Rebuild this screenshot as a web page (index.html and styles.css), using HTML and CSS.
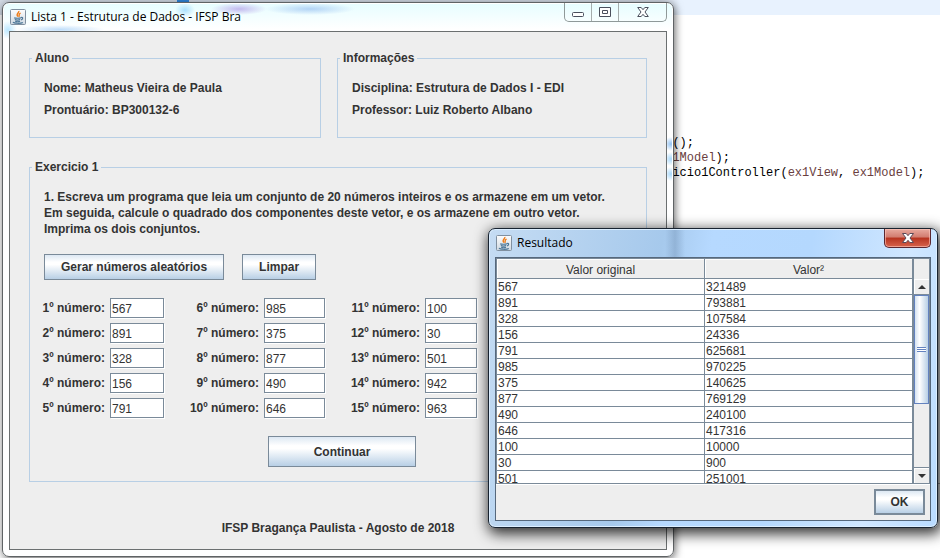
FILE: index.html
```
<!DOCTYPE html>
<html lang="pt-BR">
<head>
<meta charset="utf-8">
<title>Lista 1 - Estrutura de Dados</title>
<link rel="stylesheet" href="styles.css">
</head>
<body>
<svg class="defs" aria-hidden="true">
  <symbol id="java" viewBox="0 0 16 16">
    <linearGradient id="tile" x1="0" y1="0" x2="0" y2="1"><stop offset="0" stop-color="#fdfdfd"/><stop offset="1" stop-color="#cfd9e2"/></linearGradient>
    <rect x=".5" y=".5" width="15" height="15" rx="1" fill="url(#tile)" stroke="#8090a0"/>
    <path d="M8.8 2C9.5 4 5.4 4.600 7.800 7.600M10.600 4.200C7.800 5.200 10 6.200 8.800 7.800" fill="none" stroke="#ee7d1a" stroke-width="1.400"/>
    <path d="M4.200 8.700C5 9.400 9.600 9.400 11 8.700M4.800 10.600C6 11.300 9 11.300 10.200 10.600M5.200 12.200C6.400 12.700 9 12.700 10 12.200M11 8.600C13.400 7.800 13 10.600 11 10.800M3 13.200C4 14.600 11 14.600 12.800 13.400" fill="none" stroke="#4d7797" stroke-width="1.200"/>
  </symbol>
</svg>
<div class="desktop">
  <div class="editor-line"></div>
  <div class="divider"></div>
  <pre class="code">el();
<span>ex1Model</span>);
rcicio1Controller(<span>ex1View</span>, <span>ex1Model</span>);</pre>

  <main class="window main">
    <header class="titlebar">
      <svg class="logo"><use href="#java"/></svg>
      <h1>Lista 1 - Estrutura de Dados - IFSP Bra</h1>
      <div class="controls">
        <button aria-label="Minimizar"><svg width="12" height="12"><rect x=".5" y="6.5" width="11" height="4" rx="1" fill="#fff" stroke="#4a4f5c"/></svg></button>
        <button aria-label="Maximizar"><svg width="12" height="12"><path d="M.5 1.5h11v9H.5zM3.5 4.5h5v3h-5z" fill="#fff" stroke="#4a4f5c"/></svg></button>
        <button class="wide" aria-label="Fechar"><svg width="12" height="12"><path d="M.7 1.5h3.5L6 3.7l1.8-2.2h3.5L8 6l3.3 4.5H7.8L6 8.3l-1.8 2.2H.7L4 6z" fill="#fff" stroke="#4a4f5c"/></svg></button>
      </div>
    </header>
    <div class="client">
      <div class="groups">
        <fieldset><legend>Aluno</legend><p>Nome: Matheus Vieira de Paula</p><p>Prontuário: BP300132-6</p></fieldset>
        <fieldset><legend>Informações</legend><p>Disciplina: Estrutura de Dados I - EDI</p><p>Professor: Luiz Roberto Albano</p></fieldset>
      </div>
      <fieldset class="exercise">
        <legend>Exercicio 1</legend>
        <p class="task">1. Escreva um programa que leia um conjunto de 20 números inteiros e os armazene em um vetor.<br>Em seguida, calcule o quadrado dos componentes deste vetor, e os armazene em outro vetor.<br>Imprima os dois conjuntos.</p>
        <div class="actions"><button class="metal">Gerar números aleatórios</button><button class="metal">Limpar</button></div>
        <div class="numbers">
          <label for="n1">1º número:</label><input id="n1" value="567">
          <label for="n6">6º número:</label><input id="n6" value="985">
          <label for="n11">11º número:</label><input id="n11" value="100">
          <label for="n2">2º número:</label><input id="n2" value="891">
          <label for="n7">7º número:</label><input id="n7" value="375">
          <label for="n12">12º número:</label><input id="n12" value="30">
          <label for="n3">3º número:</label><input id="n3" value="328">
          <label for="n8">8º número:</label><input id="n8" value="877">
          <label for="n13">13º número:</label><input id="n13" value="501">
          <label for="n4">4º número:</label><input id="n4" value="156">
          <label for="n9">9º número:</label><input id="n9" value="490">
          <label for="n14">14º número:</label><input id="n14" value="942">
          <label for="n5">5º número:</label><input id="n5" value="791">
          <label for="n10">10º número:</label><input id="n10" value="646">
          <label for="n15">15º número:</label><input id="n15" value="963">
        </div>
        <button class="metal continue">Continuar</button>
      </fieldset>
      <footer>IFSP Bragança Paulista - Agosto de 2018</footer>
    </div>
  </main>

  <section class="window dialog" role="dialog" aria-labelledby="result-title">
    <header class="titlebar">
      <svg class="logo"><use href="#java"/></svg>
      <h2 id="result-title">Resultado</h2>
      <button class="close" aria-label="Fechar"><svg width="14" height="12"><path d="M1.5 1.5h3.7L7 3.7l1.8-2.2h3.7L9 6l3.5 4.5H8.8L7 8.3l-1.8 2.2H1.5L5 6z" fill="#fff" stroke="#5c4a58"/></svg></button>
    </header>
    <div class="client">
      <div class="scrollpane">
        <div class="viewport">
          <table>
            <thead><tr><th>Valor original</th><th>Valor²</th></tr></thead>
            <tbody>
              <tr><td>567</td><td>321489</td></tr>
              <tr><td>891</td><td>793881</td></tr>
              <tr><td>328</td><td>107584</td></tr>
              <tr><td>156</td><td>24336</td></tr>
              <tr><td>791</td><td>625681</td></tr>
              <tr><td>985</td><td>970225</td></tr>
              <tr><td>375</td><td>140625</td></tr>
              <tr><td>877</td><td>769129</td></tr>
              <tr><td>490</td><td>240100</td></tr>
              <tr><td>646</td><td>417316</td></tr>
              <tr><td>100</td><td>10000</td></tr>
              <tr><td>30</td><td>900</td></tr>
              <tr><td>501</td><td>251001</td></tr>
            </tbody>
          </table>
        </div>
        <div class="scrollbar">
          <div class="corner"></div>
          <button aria-label="Rolar para cima"><svg width="8" height="4"><path d="M0 4 4 0l4 4z"/></svg></button>
          <div class="track"><div class="thumb"><i></i></div></div>
          <button class="down" aria-label="Rolar para baixo"><svg width="8" height="4"><path d="M0 0h8L4 4z"/></svg></button>
        </div>
      </div>
      <div class="dialog-actions"><button class="metal ok">OK</button></div>
    </div>
  </section>
</div>
</body>
</html>
```
FILE: styles.css
```
* { box-sizing: border-box; }
body {
  margin: 0;
  background: #fff;
  color: #333;
  font: bold 12px/16px "Liberation Sans", Arial, sans-serif;
}
h1, h2, p, pre { margin: 0; }
button, input { font: inherit; color: inherit; }
.defs { position: absolute; width: 0; height: 0; }
.desktop { position: relative; min-height: 100vh; overflow: hidden; }
.editor-line {
  height: 15px;
  background:
    linear-gradient(#2f86dd, #2f86dd) 177px 0 / 12px 2px no-repeat,
    linear-gradient(90deg, #d3dbe6 660px, #e8f2fe 680px);
}
.divider { position: absolute; top: 483px; right: 0; width: 20px; height: 1px; background: #aaa; }
.code {
  position: absolute;
  top: 136px;
  left: 658px;
  color: #000;
  font: 12px/15px "Liberation Mono", monospace;
}
.code span { color: #6a3e3e; }

/* Window frames; the glass shows soft smudges of what lies behind */
.window { position: absolute; display: flex; flex-direction: column; border-radius: 7px; }
.main {
  top: 2px;
  left: 2px;
  width: 672px;
  height: 555px;
  padding: 0 6px 6px;
  border: 1px solid #5f6365;
  background:
    radial-gradient(closest-side, rgba(160, 130, 225, .55), transparent) 208px 0 / 56px 12px no-repeat,
    radial-gradient(closest-side, rgba(120, 170, 235, .5), transparent) 262px 0 / 90px 12px no-repeat,
    radial-gradient(closest-side, rgba(130, 205, 250, .6), transparent) 172px 0 / 20px 14px no-repeat,
    radial-gradient(closest-side, rgba(130, 190, 245, .5), transparent) 12px 22px / 90px 9px no-repeat,
    radial-gradient(closest-side, rgba(140, 215, 255, .6), transparent) -4px 18px / 18px 18px no-repeat,
    radial-gradient(closest-side, rgba(120, 180, 240, .8), transparent) 661px 134px / 14px 14px no-repeat,
    radial-gradient(closest-side, rgba(130, 200, 250, .7), transparent) 661px 149px / 14px 14px no-repeat,
    radial-gradient(closest-side, rgba(130, 200, 250, .7), transparent) 661px 164px / 14px 14px no-repeat,
    linear-gradient(#e6fdff, #fff 26px);
  box-shadow: inset 0 0 0 1px #fff, 1px 2px 8px rgba(0, 0, 0, .6);
}
.dialog {
  top: 228px;
  left: 488px;
  width: 450px;
  height: 300px;
  padding: 0 6px 6px;
  border: 1px solid #182330;
  background:
    linear-gradient(90deg, transparent, rgba(90, 120, 155, .3), transparent) 176px 0 / 20px 28px no-repeat,
    linear-gradient(100deg, #c5dcf3, #a6c9ec 35%, #b6d9ff 45%, #b4d8fe 65%, #d0e7ff 85%, #b9dbff);
  box-shadow: inset 0 0 0 1px #dceeff, 2px 4px 14px 2px rgba(0, 0, 0, .8);
}
.titlebar { display: flex; align-items: center; height: 28px; gap: 5px; }
.titlebar h1, .titlebar h2 {
  flex: 1;
  color: #000;
  font: 12px/16px "Open Sans", "Noto Sans", sans-serif;
}
.logo { width: 16px; height: 16px; margin-left: 1px; }
.controls {
  display: flex;
  align-self: flex-start;
  height: 19px;
  border: 1px solid #8f9999;
  border-top: 0;
  border-radius: 0 0 5px 5px;
}
.controls button {
  display: grid;
  place-items: center;
  width: 27px;
  padding: 0;
  border: 0;
  border-right: 1px solid #a5adad;
  background: none;
}
.controls .wide { width: 47px; border: 0; }
.close {
  display: grid;
  place-items: center;
  align-self: flex-start;
  width: 47px;
  height: 19px;
  padding: 0;
  border: 1px solid #5b2730;
  border-top: 0;
  border-radius: 0 0 5px 5px;
  background: linear-gradient(#e8aa9f, #d27c6f 45%, #b7331f 50%, #d7634c);
  box-shadow: inset 0 0 0 1px rgba(255, 200, 190, .6);
}
.client { flex: 1; min-height: 0; background: #eee; }

/* Main form */
.main .client { padding: 18px 19px 0; border: 1px solid #6b6f70; }
.groups { display: grid; grid-template-columns: 292fr 310fr; gap: 16px; }
fieldset {
  min-width: 0;
  margin: 0;
  padding: 11px 14px 0;
  border: 1px solid #b8cfe5;
}
legend { margin-left: -12px; padding: 0 3px; line-height: 16px; }
.groups p { line-height: 22px; }
.groups fieldset { height: 88px; }
.exercise { height: 323px; margin-top: 21px; padding: 14px 6px 0 14px; }
.actions { display: flex; gap: 18px; margin: 17px 0 18px; }
.metal {
  height: 26px;
  padding: 0 16px;
  border: 1px solid #7a8a99;
  background: linear-gradient(#dde8f3, #fff 30%, #fff 40%, #b8cfe5);
}
.numbers {
  display: grid;
  grid-template-columns: 61px 54px 90px 61px 90px 52px;
  gap: 5px;
  align-items: center;
}
.numbers label { justify-self: end; white-space: nowrap; }
.numbers input {
  width: 100%;
  height: 20px;
  padding: 1px 1px 0;
  border: 1px solid #7a8a99;
  border-radius: 0;
  background: #fff;
  box-shadow: 1px 1px #fff;
  font-weight: normal;
}
.continue { display: block; width: 148px; height: 31px; margin: 18px auto 0; }
footer { margin-top: 38px; text-align: center; }

/* Result dialog */
.dialog .client { display: flex; flex-direction: column; border: 1px solid #56687c; }
.scrollpane {
  display: flex;
  height: 226px;
  border: 1px solid #7a8a99;
  box-shadow: 0 1px #fff;
}
.viewport { flex: 1; overflow: hidden; background: #fff; }
table { width: 100%; border-collapse: separate; border-spacing: 0; table-layout: fixed; font-weight: normal; }
th, td {
  height: 16px;
  padding: 1px 1px 0;
  border-right: 1px solid #7a8a99;
  border-bottom: 1px solid #7a8a99;
  line-height: 14px;
}
th { height: 20px; padding-top: 2px; background: #eee; box-shadow: inset 1px 1px #fff; font-weight: normal; }
.scrollbar { display: flex; flex-direction: column; width: 16px; border-left: 1px solid #7a8a99; background: #eee; }
.corner { height: 20px; }
.scrollbar button {
  display: grid;
  place-items: center;
  height: 16px;
  padding: 0;
  border: 0;
  border-bottom: 1px solid #7a8a99;
  background: #eee;
  box-shadow: inset 1px 1px #fff;
}
.scrollbar svg { fill: #333; }
.scrollbar .down { border-top: 1px solid #7a8a99; border-bottom: 0; }
.track { flex: 1; }
.thumb {
  display: grid;
  place-items: center;
  height: 109px;
  border: 1px solid #6382bf;
  background: linear-gradient(90deg, #d5e2f0, #fff 35%, #b8cfe5);
}
.thumb i {
  width: 9px;
  height: 5px;
  border-top: 1px solid #6382bf;
  border-bottom: 1px solid #6382bf;
  background: linear-gradient(#fff 1px, #6382bf 1px, #6382bf 2px, #fff 2px);
}
.dialog-actions { display: flex; justify-content: flex-end; padding: 5px; }
.ok { width: 51px; padding: 0; border-width: 2px; }
```
